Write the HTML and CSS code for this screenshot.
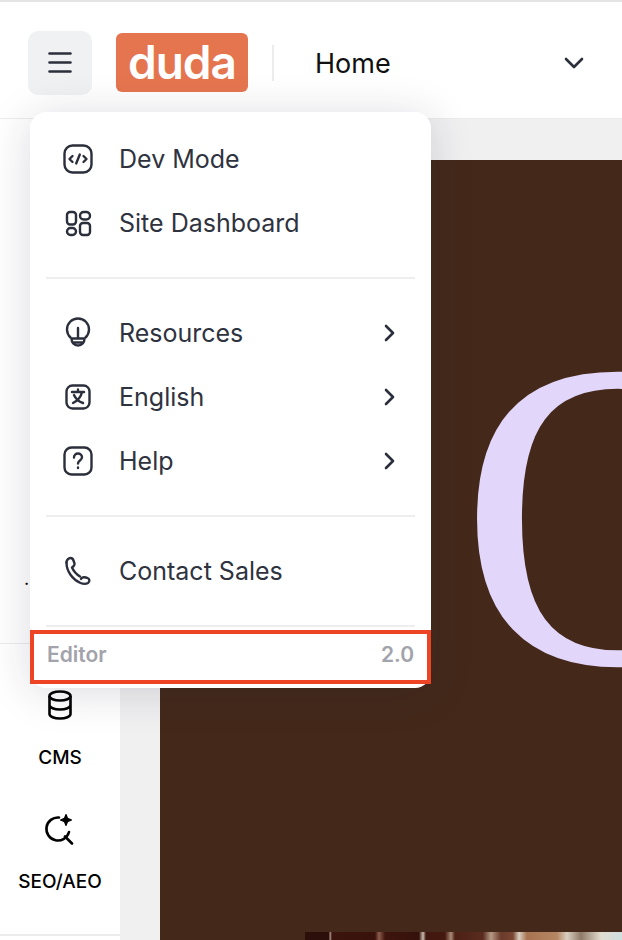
FILE: index.html
```html
<!DOCTYPE html>
<html lang="en">
<head>
    <meta charset="UTF-8">
    <meta name="viewport" content="width=device-width, initial-scale=1.0">
    <title>Duda Editor</title>
    <link rel="stylesheet" href="styles.css">
</head>
<body>
    <header class="topbar">
        <button class="burger" aria-label="Menu">
            <svg width="32" height="32" viewBox="0 0 32 32" fill="none" stroke="#2b2f3b" stroke-width="2.6" stroke-linecap="round"><path d="M5.500 6.500h21M5.500 15.500h21M5.500 24.500h21"/></svg>
        </button>
        <div class="logo">duda</div>
        <div class="topbar-sep"></div>
        <div class="page-name">Home</div>
        <svg class="page-chevron" width="24" height="24" viewBox="0 0 24 24" fill="none" stroke="#2b2f3b" stroke-width="2.6" stroke-linecap="round" stroke-linejoin="round"><path d="M4 8l8 8 8-8"/></svg>
    </header>

    <div class="workspace">
        <aside class="sidebar">
            <div class="side-top"><span class="side-dot">.</span></div>
            <div class="side-group">
                <div class="side-item">
                    <svg width="32" height="32" viewBox="0 0 32 32" fill="none" stroke="#000" stroke-width="2.6" stroke-linejoin="round"><ellipse cx="16" cy="7" rx="10.500" ry="4.500"/><path d="M5.500 7v18c0 2.500 4.700 4.500 10.500 4.500s10.500-2 10.500-4.500V7M5.500 16c0 2.500 4.700 4.500 10.500 4.500s10.500-2 10.500-4.500"/></svg>
                    <span class="side-label">CMS</span>
                </div>
                <div class="side-item">
                    <svg width="32" height="32" viewBox="0 0 32 32" fill="none" stroke="#000" stroke-width="2.6" stroke-linecap="round"><path d="M15 4.500A11.500 11.500 0 1 0 25 19"/><path d="M21 23.500l7 7"/><path d="M22 1.500l1.600 3.900 3.900 1.600-3.900 1.600L22 12.500l-1.600-3.900-3.900-1.600 3.900-1.600z" fill="#000" stroke-width="1.200" stroke-linejoin="round"/></svg>
                    <span class="side-label">SEO/AEO</span>
                </div>
            </div>
        </aside>

        <main class="stage">
            <div class="canvas">
                <div class="hero"><span class="hero-letter">O</span></div>
                <div class="hero-photo"></div>
            </div>
        </main>
    </div>

    <nav class="menu">
        <div class="menu-group">
            <div class="menu-row">
                <svg class="menu-icon" viewBox="0 0 32 32"><rect x="2.500" y="2.500" width="27" height="27" rx="8"/><path d="M10.500 13l-3 3 3 3M21.500 13l3 3-3 3M17.800 11.500l-3.600 9"/></svg>
                <span class="menu-label">Dev Mode</span>
            </div>
            <div class="menu-row">
                <svg class="menu-icon" viewBox="0 0 32 32"><rect x="5" y="5" width="9" height="12.500" rx="3"/><rect x="18" y="5" width="10" height="7.500" rx="3.700"/><rect x="5" y="21" width="9" height="7" rx="3.500"/><rect x="18" y="16" width="10" height="12" rx="3"/></svg>
                <span class="menu-label">Site Dashboard</span>
            </div>
        </div>
        <div class="menu-divider"></div>
        <div class="menu-group">
            <div class="menu-row">
                <svg class="menu-icon" viewBox="0 0 32 32"><path d="M8.500 20.500a11 11 0 1 1 15 0"/><path d="M16 11v10M9.500 21.500h13c0 4-2.500 7-6.500 7s-6.500-3-6.500-7zM11 25.500h10"/></svg>
                <span class="menu-label">Resources</span>
                <svg class="menu-arrow" width="16" height="20" viewBox="0 0 16 20"><path d="M4 3l7 7-7 7"/></svg>
            </div>
            <div class="menu-row">
                <svg class="menu-icon" viewBox="0 0 32 32"><rect x="4.500" y="4.500" width="23" height="23" rx="6"/><path d="M16 8.500v2.500M10 11h12M20 11c-1 5-5 9-9 11M12 14c1.500 3.500 4.500 6.500 9 8"/></svg>
                <span class="menu-label">English</span>
                <svg class="menu-arrow" width="16" height="20" viewBox="0 0 16 20"><path d="M4 3l7 7-7 7"/></svg>
            </div>
            <div class="menu-row">
                <svg class="menu-icon" viewBox="0 0 32 32"><rect x="2.500" y="2.500" width="27" height="27" rx="7"/><path d="M12 12.500c0-2.500 1.800-4 4-4s4 1.500 4 3.700c0 3.300-4 3.300-4 6.300M16 22.500v.5"/></svg>
                <span class="menu-label">Help</span>
                <svg class="menu-arrow" width="16" height="20" viewBox="0 0 16 20"><path d="M4 3l7 7-7 7"/></svg>
            </div>
        </div>
        <div class="menu-divider"></div>
        <div class="menu-group">
            <div class="menu-row">
                <svg class="menu-icon" viewBox="0 0 32 32"><path d="M4.500 7.500c0-2.500 2-4.500 4-4.500 1.500 0 2.500 1 3 2.500l1 3c.3 1.200-.2 2-1 2.800l-1.500 1.200c1.500 3.500 4 6.500 8 9"/><path d="M4.500 7.500c0 9 6 17 14 20.500 2.500 1 5.500 1.200 7.500 0 2-1.300 1.800-4-.5-5-2.500-1.200-5.500-1.200-6.500 1"/></svg>
                <span class="menu-label">Contact Sales</span>
            </div>
        </div>
        <div class="menu-divider menu-divider-last"></div>
        <div class="menu-footer">
            <span>Editor</span>
            <span>2.0</span>
        </div>
    </nav>
</body>
</html>
```

FILE: styles.css
```css
* {
    box-sizing: border-box;
}
html, body {
    height: 100%;
}
body {
    margin: 0;
    height: 940px;
    overflow: hidden;
    position: relative;
    display: flex;
    flex-direction: column;
    background: #f0f0f1;
    border-top: 2px solid #e4e4e4;
    font-family: "Inter", "Liberation Sans", sans-serif;
    color: #2b2f3b;
}

/* top bar */
.topbar {
    flex: none;
    height: 117px;
    display: flex;
    align-items: center;
    padding: 6px 28px 0;
    background: white;
    border-bottom: 1px solid #ececee;
}
.burger {
    width: 64px;
    height: 64px;
    padding: 0;
    display: flex;
    align-items: center;
    justify-content: center;
    border: none;
    border-radius: 10px;
    background: #f0f1f2;
}
.logo {
    width: 132px;
    height: 59px;
    margin: -2px 0 0 24px;
    display: flex;
    align-items: center;
    justify-content: center;
    border-radius: 6px;
    background: #e5754f;
    color: white;
    font-size: 46px;
    font-weight: 600;
    line-height: 1;
    letter-spacing: -1px;
}
.topbar-sep {
    width: 2px;
    height: 36px;
    margin-left: 24px;
    background: #ececee;
}
.page-name {
    margin-left: 41px;
    font-size: 27px;
    color: #111;
}
.page-chevron {
    margin: 0 8px 0 auto;
}

/* left rail and page preview */
.workspace {
    flex: 1;
    min-height: 0;
    display: flex;
}
.sidebar {
    flex: none;
    width: 120px;
    display: flex;
    flex-direction: column;
    background: white;
    color: #000;
}
.side-top {
    height: 525px;
    padding: 0 0 55px 24px;
    display: flex;
    align-items: flex-end;
    border-bottom: 1px solid #ececee;
    font-size: 18px;
}
.side-dot {
    line-height: 1;
}
.side-group {
    height: 292px;
    padding-top: 45px;
    border-bottom: 2px solid #ececee;
}
.side-item {
    height: 124px;
    display: flex;
    flex-direction: column;
    align-items: center;
}
.side-label {
    margin-top: 26px;
    font-size: 19px;
    font-weight: 500;
    line-height: 22px;
    white-space: nowrap;
}
.stage {
    flex: 1;
    min-width: 0;
    padding: 41px 0 0 40px;
}
.canvas {
    height: 100%;
    display: flex;
    flex-direction: column;
    overflow: hidden;
    background: #44291a;
}
.hero {
    height: 772px;
    flex: none;
    padding: 135px 0 0 299px;
    overflow: hidden;
}
.hero-letter {
    display: block;
    font-family: "Liberation Serif", serif;
    font-size: 440px;
    line-height: 1;
    color: #e2d6fa;
}
.hero-photo {
    flex: 1;
    margin-left: 145px;
    background: linear-gradient(90deg, #2c0f0a 0, #2c0f0a 24px, #b39a8c 25px, #3a140d 27px, #3a120c 70px, #8c5d4c 74px, #3f150e 80px, #35110b 114px, #ccbdb0 118px, #40170f 121px, #45190f 140px, #a98a78 146px, #4d2015 150px, #5a2c20 178px, #b59a86 186px, #6b3a2a 196px, #7a4632 208px, #d9cfc0 214px, #a87350 222px, #b58763 252px, #d9cfc0 262px, #8f7a68 276px, #e2dccf 296px, #cfe0e0 317px);
}

/* dropdown menu */
.menu {
    position: absolute;
    left: 30px;
    top: 110px;
    width: 401px;
    height: 576px;
    padding-top: 15px;
    border-radius: 16px;
    background: white;
    box-shadow: 0 4px 44px rgba(30, 30, 60, 0.16);
}
.menu-row {
    height: 64px;
    padding: 0 33px 0 32px;
    display: flex;
    align-items: center;
}
.menu-icon {
    flex: none;
    width: 32px;
    height: 32px;
    fill: none;
    stroke: #2b2f3b;
    stroke-width: 2.4;
    stroke-linecap: round;
    stroke-linejoin: round;
}
.menu-label {
    margin-left: 25px;
    font-size: 25px;
    color: #2f3340;
}
.menu-arrow {
    margin-left: auto;
    fill: none;
    stroke: #2b2f3b;
    stroke-width: 2.6;
    stroke-linecap: round;
    stroke-linejoin: round;
}
.menu-divider {
    height: 2px;
    margin: 22px 16px;
    background: #eeeeef;
}
.menu-divider-last {
    margin-bottom: 3px;
}
.menu-footer {
    height: 54px;
    padding: 0 13px 6px;
    display: flex;
    align-items: center;
    justify-content: space-between;
    border: 4px solid #ee4426;
    font-size: 21px;
    font-weight: 600;
    color: #a3a3ab;
}
```
